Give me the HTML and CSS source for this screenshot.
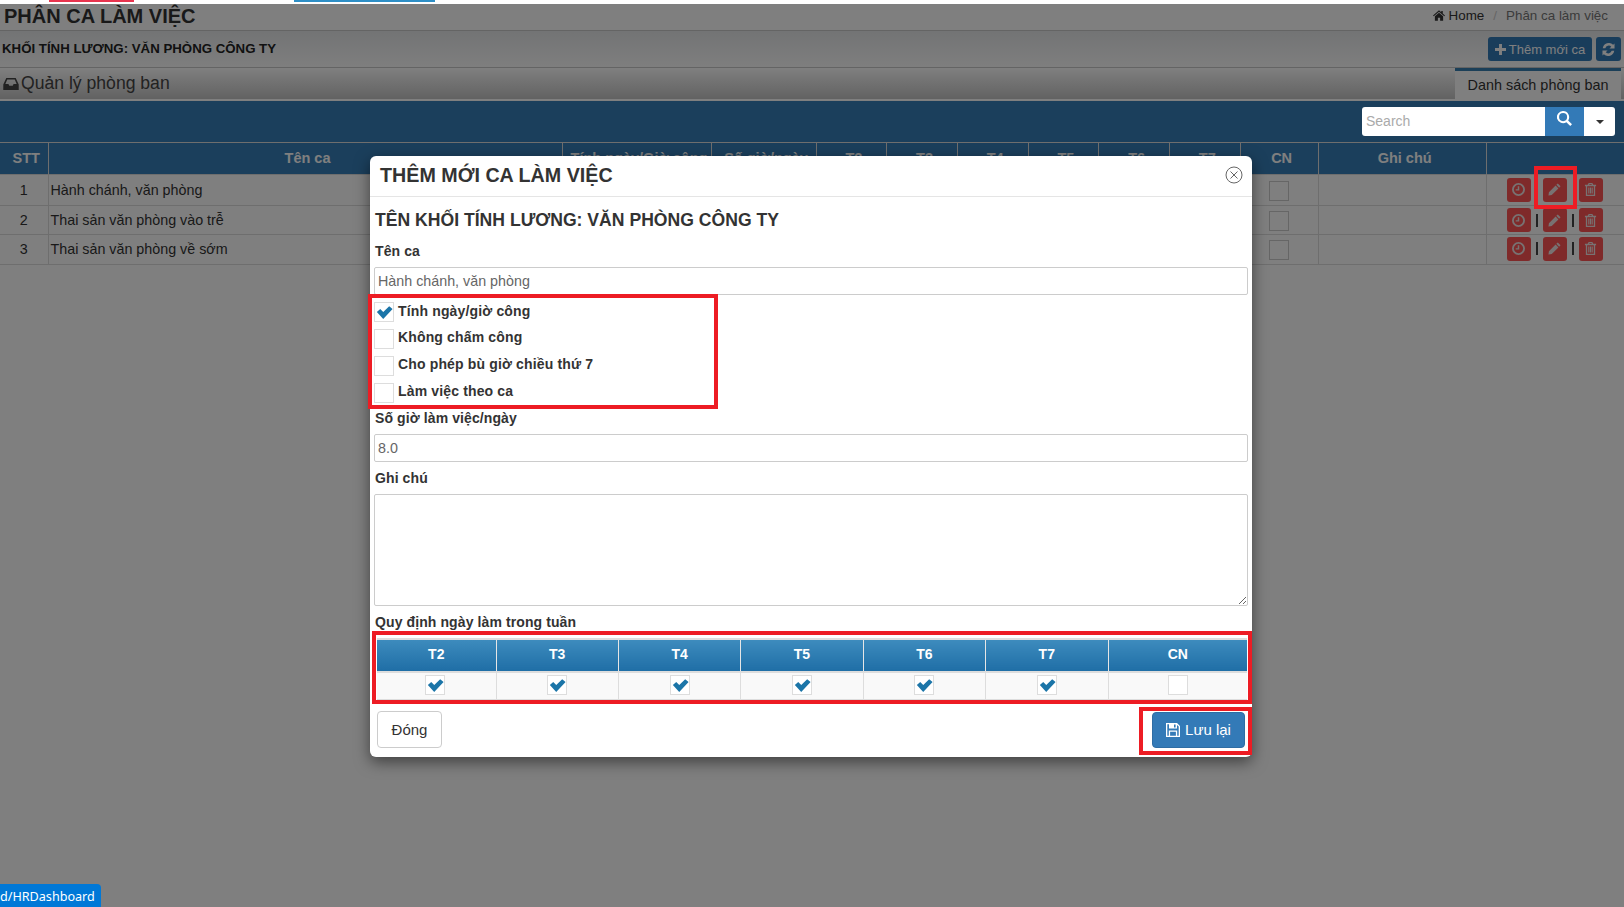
FILE: index.html
```html
<!DOCTYPE html>
<html lang="vi">
<head>
  <meta charset="UTF-8" />
  <title>Phân ca làm việc</title>
  <link rel="stylesheet" href="styles.css">
</head>
<body>

<svg class="defs" width="0" height="0">
  <symbol id="i-check" viewBox="0 0 20 20"><path d="M1 9.5 L5 6 L8.5 9.5 L15.5 2.5 L19.5 6 L8.5 17.5 Z"/></symbol>
  <symbol id="i-home" viewBox="0 0 16 14"><path d="M8 0 L11 2.6 V1 H13 V4.4 L16 7 L15 8 L8 2 L1 8 L0 7 Z M2.5 8 L8 3.4 L13.5 8 V14 H9.5 V10 H6.5 V14 H2.5 Z"/></symbol>
  <symbol id="i-plus" viewBox="0 0 12 12"><path d="M4.4 0 H7.6 V4.4 H12 V7.6 H7.6 V12 H4.4 V7.6 H0 V4.4 H4.4 Z"/></symbol>
  <symbol id="i-refresh" viewBox="0 0 14 14"><path d="M13.5 0.5 V6 H8 L10 4 A3.8 3.8 0 0 0 3.6 5.6 H0.8 A6.6 6.6 0 0 1 12 2 Z M0.5 13.5 V8 H6 L4 10 A3.8 3.8 0 0 0 10.4 8.4 H13.2 A6.6 6.6 0 0 1 2 12 Z"/></symbol>
  <symbol id="i-inbox" viewBox="0 0 18 14"><path d="M3.5 0 H14.5 L18 7.5 V14 H0 V7.5 Z M4.6 1.8 L2.4 7 H6 L7 9 H11 L12 7 H15.6 L13.4 1.8 Z"/></symbol>
  <symbol id="i-search" viewBox="0 0 16 16"><path fill-rule="evenodd" d="M6.5 0 A6.5 6.5 0 0 1 11.9 10 L16 14.1 L14.1 16 L10 11.9 A6.5 6.5 0 1 1 6.5 0 Z M6.5 2.2 A4.3 4.3 0 1 0 6.5 10.8 A4.3 4.3 0 1 0 6.5 2.2 Z"/></symbol>
  <symbol id="i-clock" viewBox="0 0 14 14"><path fill-rule="evenodd" d="M7 0 A7 7 0 1 1 7 14 A7 7 0 1 1 7 0 Z M7 2 A5 5 0 1 0 7 12 A5 5 0 1 0 7 2 Z M6.2 3.5 H7.8 V8.2 H4 V6.8 H6.2 Z"/></symbol>
  <symbol id="i-pencil" viewBox="0 0 14 14"><path d="M10.5 0.5 L13.5 3.5 L12 5 L9 2 Z M8.2 2.8 L11.2 5.8 L4 13 L0.5 13.5 L1 10 Z"/></symbol>
  <symbol id="i-trash" viewBox="0 0 12 14"><path fill-rule="evenodd" d="M4 0 H8 L9 2 H12 V3.4 H11 V14 H1 V3.4 H0 V2 H3 Z M5 1.1 L4.5 2 H7.5 L7 1.1 Z M2.4 3.4 V12.7 H9.6 V3.4 Z M3.6 4.8 H4.8 V11.4 H3.6 Z M5.4 4.8 H6.6 V11.4 H5.4 Z M7.2 4.8 H8.4 V11.4 H7.2 Z"/></symbol>
  <symbol id="i-save" viewBox="0 0 14 14"><path fill-rule="evenodd" d="M0 0 H11 L14 3 V14 H0 Z M1.3 1.3 V12.7 H2.8 V7.5 H11.2 V12.7 H12.7 V3.6 L11 1.9 V5.5 H3 V1.3 Z M4.1 8.7 V12.7 H9.9 V8.7 Z M8 1.6 V4.6 H9.6 V1.6 Z"/></symbol>
</svg>

<div class="top-strip">
  <span class="strip-red"></span>
  <span class="strip-blue"></span>
</div>

<div class="page-head">
  <h1>PHÂN CA LÀM VIỆC</h1>
  <div class="crumbs">
    <svg class="ic ic-home"><use href="#i-home"/></svg>
    <span class="crumb-home">Home</span>
    <span class="crumb-sep">/</span>
    <span class="crumb-now">Phân ca làm việc</span>
  </div>
</div>

<div class="sub-head">
  <b>KHỐI TÍNH LƯƠNG: VĂN PHÒNG CÔNG TY</b>
  <div class="sub-actions">
    <button class="btn-blue btn-add"><svg class="ic ic-plus"><use href="#i-plus"/></svg>Thêm mới ca</button>
    <button class="btn-blue btn-refresh"><svg class="ic ic-refresh"><use href="#i-refresh"/></svg></button>
  </div>
</div>

<div class="panel-head">
  <div class="panel-title"><svg class="ic ic-inbox"><use href="#i-inbox"/></svg>Quản lý phòng ban</div>
  <div class="tab">Danh sách phòng ban</div>
</div>

<div class="toolbar">
  <div class="search-box">
    <input class="search-input" type="text" placeholder="Search">
    <button class="search-btn"><svg class="ic ic-search"><use href="#i-search"/></svg></button>
    <button class="caret-btn"><span class="caret"></span></button>
  </div>
</div>

<table class="grid">
  <colgroup>
    <col class="c-stt"><col class="c-name"><col class="c-calc"><col class="c-hours">
    <col class="c-day"><col class="c-day"><col class="c-day"><col class="c-day"><col class="c-day"><col class="c-day">
    <col class="c-cn"><col class="c-note"><col class="c-act">
  </colgroup>
  <thead>
    <tr>
      <th>STT</th><th>Tên ca</th><th>Tính ngày/Giờ công</th><th>Số giờ/ngày</th>
      <th>T2</th><th>T3</th><th>T4</th><th>T5</th><th>T6</th><th>T7</th><th>CN</th><th>Ghi chú</th><th></th>
    </tr>
  </thead>
  <tbody>
    <tr class="row-a">
      <td class="num">1</td><td>Hành chánh, văn phòng</td><td></td><td></td>
      <td></td><td></td><td></td><td></td><td></td><td></td>
      <td class="mid"><span class="box"></span></td><td></td>
      <td class="acts">
        <span class="act"><svg class="ic ic-act"><use href="#i-clock"/></svg></span>
        <i class="bar bar-off"></i>
        <span class="act"><svg class="ic ic-act"><use href="#i-pencil"/></svg></span>
        <i class="bar bar-off"></i>
        <span class="act"><svg class="ic ic-act"><use href="#i-trash"/></svg></span>
      </td>
    </tr>
    <tr class="row-b">
      <td class="num">2</td><td>Thai sản văn phòng vào trễ</td><td></td><td></td>
      <td></td><td></td><td></td><td></td><td></td><td></td>
      <td class="mid"><span class="box"></span></td><td></td>
      <td class="acts">
        <span class="act"><svg class="ic ic-act"><use href="#i-clock"/></svg></span>
        <i class="bar"></i>
        <span class="act"><svg class="ic ic-act"><use href="#i-pencil"/></svg></span>
        <i class="bar"></i>
        <span class="act"><svg class="ic ic-act"><use href="#i-trash"/></svg></span>
      </td>
    </tr>
    <tr class="row-c">
      <td class="num">3</td><td>Thai sản văn phòng về sớm</td><td></td><td></td>
      <td></td><td></td><td></td><td></td><td></td><td></td>
      <td class="mid"><span class="box"></span></td><td></td>
      <td class="acts">
        <span class="act"><svg class="ic ic-act"><use href="#i-clock"/></svg></span>
        <i class="bar"></i>
        <span class="act"><svg class="ic ic-act"><use href="#i-pencil"/></svg></span>
        <i class="bar"></i>
        <span class="act"><svg class="ic ic-act"><use href="#i-trash"/></svg></span>
      </td>
    </tr>
  </tbody>
</table>

<div class="backdrop"></div>

<!-- hộp thoại thêm mới -->
<div class="modal">
  <div class="modal-head">
    <h3>THÊM MỚI CA LÀM VIỆC</h3>
    <span class="modal-close">
      <svg width="18" height="18" viewBox="0 0 18 18"><circle cx="9" cy="9" r="8" fill="none" stroke="#666" stroke-width="1"/><path d="M5.5 5.5 L12.5 12.5 M12.5 5.5 L5.5 12.5" stroke="#666" stroke-width="1"/></svg>
    </span>
  </div>
  <div class="modal-body">
    <h4>TÊN KHỐI TÍNH LƯƠNG: VĂN PHÒNG CÔNG TY</h4>
    <label class="lbl lbl-first">Tên ca</label>
    <input class="field" type="text" value="Hành chánh, văn phòng">

    <div class="check-list">
      <div class="check-row">
        <span class="box on"><svg class="ic ic-check"><use href="#i-check"/></svg></span>
        <span class="check-text">Tính ngày/giờ công</span>
      </div>
      <div class="check-row">
        <span class="box on"></span>
        <span class="check-text">Không chấm công</span>
      </div>
      <div class="check-row">
        <span class="box on"></span>
        <span class="check-text">Cho phép bù giờ chiều thứ 7</span>
      </div>
      <div class="check-row">
        <span class="box on"></span>
        <span class="check-text">Làm việc theo ca</span>
      </div>
    </div>

    <label class="lbl">Số giờ làm việc/ngày</label>
    <input class="field" type="text" value="8.0">
    <label class="lbl">Ghi chú</label>
    <textarea class="field note"></textarea>
    <label class="lbl">Quy định ngày làm trong tuần</label>

    <table class="week">
      <thead>
        <tr><th>T2</th><th>T3</th><th>T4</th><th>T5</th><th>T6</th><th>T7</th><th>CN</th></tr>
      </thead>
      <tbody>
        <tr>
          <td><span class="box on"><svg class="ic ic-check"><use href="#i-check"/></svg></span></td>
          <td><span class="box on"><svg class="ic ic-check"><use href="#i-check"/></svg></span></td>
          <td><span class="box on"><svg class="ic ic-check"><use href="#i-check"/></svg></span></td>
          <td><span class="box on"><svg class="ic ic-check"><use href="#i-check"/></svg></span></td>
          <td><span class="box on"><svg class="ic ic-check"><use href="#i-check"/></svg></span></td>
          <td><span class="box on"><svg class="ic ic-check"><use href="#i-check"/></svg></span></td>
          <td><span class="box on"></span></td>
        </tr>
      </tbody>
    </table>

    <div class="modal-foot">
      <button class="btn-close">Đóng</button>
      <button class="btn-save"><svg class="ic ic-save"><use href="#i-save"/></svg>Lưu lại</button>
    </div>
  </div>
</div>

<!-- khung đỏ chú thích -->
<div class="mark mark-edit"></div>
<div class="mark mark-checks"></div>
<div class="mark mark-week"></div>
<div class="mark mark-save"></div>

<div class="status-url">d/HRDashboard</div>

</body>
</html>
```

FILE: styles.css
```css
html, body {
  margin: 0;
  padding: 0;
  height: 907px;
  overflow: hidden;
}
body {
  font-family: "Liberation Sans", Arial, sans-serif;
  font-size: 14px;
  color: #333;
  background: #fff;
  position: relative;
}
.defs { position: absolute; }
.ic { fill: currentColor; display: inline-block; }

.top-strip {
  height: 4px;
  display: flex;
  position: relative;
  z-index: 5;
  background: #fff;
}
.strip-red { width: 85px; height: 2px; margin-left: 49px; background: #e8344e; }
.strip-blue { width: 141px; height: 2px; margin-left: 160px; background: #2e8fc6; }

.page-head {
  height: 26px;
  box-sizing: content-box;
  border-bottom: 1px solid #c8c8c8;
  display: flex;
  justify-content: space-between;
  align-items: flex-start;
  padding: 0 16px 0 4px;
  background: #fff;
}
.page-head h1 {
  margin: 1px 0 0;
  font-size: 20px;
  line-height: 22px;
  color: #333;
}
.crumbs { font-size: 13.4px; display: flex; align-items: center; margin-top: 4px; }
.ic-home { width: 12px; height: 11px; margin-right: 4px; }
.crumb-sep { color: #ccc; margin: 0 9px; }
.crumb-now { color: #777; }

.sub-head {
  height: 36px;
  border-bottom: 1px solid #c8c8c8;
  display: flex;
  justify-content: space-between;
  align-items: center;
  padding: 0 3px 0 2px;
  background: linear-gradient(#e6e8ea, #fdfdfd);
}
.sub-head b { font-size: 13.25px; color: #222; padding-bottom: 2px; }
.sub-actions { display: flex; gap: 4px; }
.btn-blue {
  height: 24px;
  border: 0;
  border-radius: 3px;
  background: #337ab7;
  color: #fff;
  font: 13px "Liberation Sans", Arial, sans-serif;
  padding: 0;
  display: flex;
  align-items: center;
  justify-content: center;
}
.btn-add { width: 104px; }
.btn-refresh { width: 25px; }
.ic-plus { width: 11px; height: 11px; margin-right: 3px; }
.ic-refresh { width: 13px; height: 13px; }

.panel-head {
  height: 31px;
  display: flex;
  justify-content: space-between;
  align-items: stretch;
  padding-right: 3px;
  background: linear-gradient(#ffffff, #c4c4c4);
}
.panel-title {
  font-size: 17.6px;
  color: #444;
  display: flex;
  align-items: center;
  padding-left: 3px;
}
.ic-inbox { width: 16px; height: 12px; margin-right: 2px; }
.tab {
  width: 166px;
  box-sizing: border-box;
  border-top: 3px solid #367eb0;
  background: #fff;
  text-align: center;
  line-height: 28px;
  font-size: 14.4px;
  color: #333;
}

.toolbar {
  height: 41px;
  margin-top: 2px;
  background: #367fb8;
  display: flex;
  justify-content: flex-end;
  align-items: flex-start;
  padding: 6px 9px 0 0;
  box-sizing: border-box;
}
.search-box { display: flex; height: 29px; position: relative; z-index: 1; }
.search-input {
  width: 183px;
  box-sizing: border-box;
  border: 0;
  padding: 0 4px 2px;
  border-radius: 3px 0 0 3px;
  font: 14px "Liberation Sans", Arial, sans-serif;
}
.search-input::placeholder { color: #aaa; }
.search-btn {
  width: 39px;
  border: 0;
  padding: 0 0 3px;
  background: #337ab7;
  color: #fff;
}
.ic-search { width: 15px; height: 15px; }
.caret-btn {
  width: 31px;
  border: 0;
  padding: 0;
  background: #fff;
  border-radius: 0 3px 3px 0;
}
.caret {
  display: inline-block;
  border: 4px solid transparent;
  border-top-color: #333;
  border-bottom: 0;
  vertical-align: middle;
}

.grid {
  width: 1624px;
  table-layout: fixed;
  border-collapse: collapse;
  background: #fff;
}
.c-stt { width: 48px; }
.c-name { width: 514px; }
.c-calc { width: 149px; }
.c-hours { width: 105px; }
.c-day { width: 70.7px; }
.c-cn { width: 78px; }
.c-note { width: 168px; }
.c-act { width: 138px; }
.grid th {
  height: 32px;
  box-sizing: border-box;
  padding: 0 0 2px 5px;
  border: 1px solid #ddd;
  border-bottom: 0;
  background: #367fb8;
  color: #fff;
  font-size: 14.5px;
  text-align: center;
}
.grid td {
  box-sizing: border-box;
  padding: 0 2px;
  border: 1px solid #ddd;
  color: #333;
  font-size: 14.3px;
}
.grid th:first-child, .grid td:first-child { border-left: 0; }
.grid th:last-child, .grid td:last-child { border-right: 0; }
.row-a td { height: 31px; padding-bottom: 1px; }
.row-b td { height: 29px; }
.row-c td { height: 30px; padding-bottom: 2px; }
.grid td.num { text-align: center; }
.grid td.mid { text-align: center; padding: 2px 0 0; }
.grid .row-c td.mid { padding-top: 0; }
.grid td.acts { padding-left: 20px; font-size: 0; white-space: nowrap; }
.box {
  display: inline-block;
  width: 20px;
  height: 20px;
  box-sizing: border-box;
  border: 1px solid #ccc;
  background: #fff;
  vertical-align: middle;
  position: relative;
}
.act {
  display: inline-flex;
  align-items: center;
  justify-content: center;
  width: 24px;
  height: 24px;
  border-radius: 3px;
  background: #ff5555;
  color: #f0e4e4;
  vertical-align: middle;
}
.ic-act { width: 13px; height: 13px; }
.bar {
  display: inline-block;
  width: 2px;
  height: 13px;
  margin: 0 5px;
  background: #444;
  vertical-align: middle;
}
.bar-off { background: transparent; }

.backdrop {
  position: absolute;
  top: 4px;
  left: 0;
  right: 0;
  bottom: 0;
  background: rgba(0, 0, 0, 0.5);
}

.modal {
  position: absolute;
  left: 370px;
  top: 156px;
  width: 882px;
  height: 601px;
  background: #fff;
  border-radius: 6px;
  box-shadow: 0 5px 15px rgba(0, 0, 0, 0.5);
  z-index: 2;
}
.modal-head {
  height: 38px;
  padding-bottom: 2px;
  border-bottom: 1px solid #e5e5e5;
  display: flex;
  justify-content: space-between;
  align-items: center;
  padding-left: 10px;
  padding-right: 9px;
}
.modal-head h3 {
  margin: 0;
  font-size: 19.7px;
  color: #333;
}
.modal-close { display: flex; }
.modal-body { padding: 0 4px 0 4px; }
.modal-body h4 {
  margin: 13px 0 0 1px;
  font-size: 17.6px;
  line-height: 20px;
  color: #333;
}
.lbl {
  display: block;
  margin: 8px 0 0 1px;
  font-size: 14px;
  letter-spacing: 0.1px;
  font-weight: bold;
  line-height: 16px;
  color: #333;
}
.lbl-first { margin-top: 13px; }
.field {
  display: block;
  width: 100%;
  height: 28px;
  box-sizing: border-box;
  margin-top: 8px;
  padding: 0 3px;
  border: 1px solid #ccc;
  border-radius: 2px;
  font: 14.3px "Liberation Sans", Arial, sans-serif;
  color: #666;
}
.note { height: 112px; }
.check-list {
  display: flex;
  flex-direction: column;
  gap: 7px;
  margin-top: 7px;
  margin-bottom: -1px;
}
.check-row { display: flex; align-items: center; gap: 4px; height: 20px; }
.check-text {
  font-size: 14px;
  letter-spacing: 0.15px;
  font-weight: bold;
  color: #333;
  padding-bottom: 3px;
}
.check-row + .check-row .check-text { padding-bottom: 5px; }
.box.on { border-color: #ddd; color: #1b75a8; }
.ic-check {
  position: absolute;
  left: 1px;
  top: 1px;
  width: 17px;
  height: 17px;
}

.week {
  width: 870px;
  margin: 8px 0 0 3px;
  table-layout: fixed;
  border-collapse: collapse;
}
.week th {
  height: 33px;
  padding: 0 0 4px;
  background: linear-gradient(#3d8bbd, #1f6ea6);
  border-left: 1px solid #e6e6e6;
  border-top: 2px solid #ddd;
  box-sizing: border-box;
  color: #fff;
  font-size: 14px;
}
.week th:first-child { border-left: 0; width: 119px; }
.week th:last-child { width: 139px; }
.week td {
  height: 27px;
  box-sizing: border-box;
  padding: 0 0 2px;
  background: #f9f9f9;
  border-top: 2px solid #ddd;
  border-left: 1px solid #ddd;
  border-bottom: 1px solid #ddd;
  text-align: center;
}
.week td:first-child { border-left: 0; padding-right: 2px; }

.modal-foot {
  display: flex;
  justify-content: space-between;
  margin: 11px 0 0 3px;
  padding-right: 3px;
}
.btn-close {
  width: 65px;
  height: 37px;
  border: 1px solid #ccc;
  border-radius: 4px;
  background: #fff;
  color: #333;
  font: 15px "Liberation Sans", Arial, sans-serif;
  padding: 0;
}
.btn-save {
  width: 93px;
  height: 36px;
  margin-top: 1px;
  border: 1px solid #2e6da4;
  border-radius: 4px;
  background: #337ab7;
  color: #fff;
  font: 15px "Liberation Sans", Arial, sans-serif;
  padding: 0;
  display: flex;
  align-items: center;
  justify-content: center;
}
.ic-save { width: 14px; height: 14px; margin-right: 5px; }

.mark {
  position: absolute;
  z-index: 3;
  box-sizing: border-box;
  border: 4px solid #ed1c24;
}
.mark-edit { left: 1534px; top: 166px; width: 43px; height: 43px; }
.mark-checks { left: 368px; top: 294px; width: 350px; height: 115px; }
.mark-week { left: 372px; top: 631px; width: 880px; height: 73px; }
.mark-save { left: 1139px; top: 707px; width: 113px; height: 48px; }

.status-url {
  position: absolute;
  z-index: 3;
  left: 0;
  bottom: 0;
  width: 101px;
  height: 23px;
  box-sizing: border-box;
  background: #0078d7;
  border-radius: 0 4px 0 0;
  color: #fff;
  font: 12.6px/25px "Noto Sans", sans-serif;
  white-space: nowrap;
  overflow: hidden;
}
```
